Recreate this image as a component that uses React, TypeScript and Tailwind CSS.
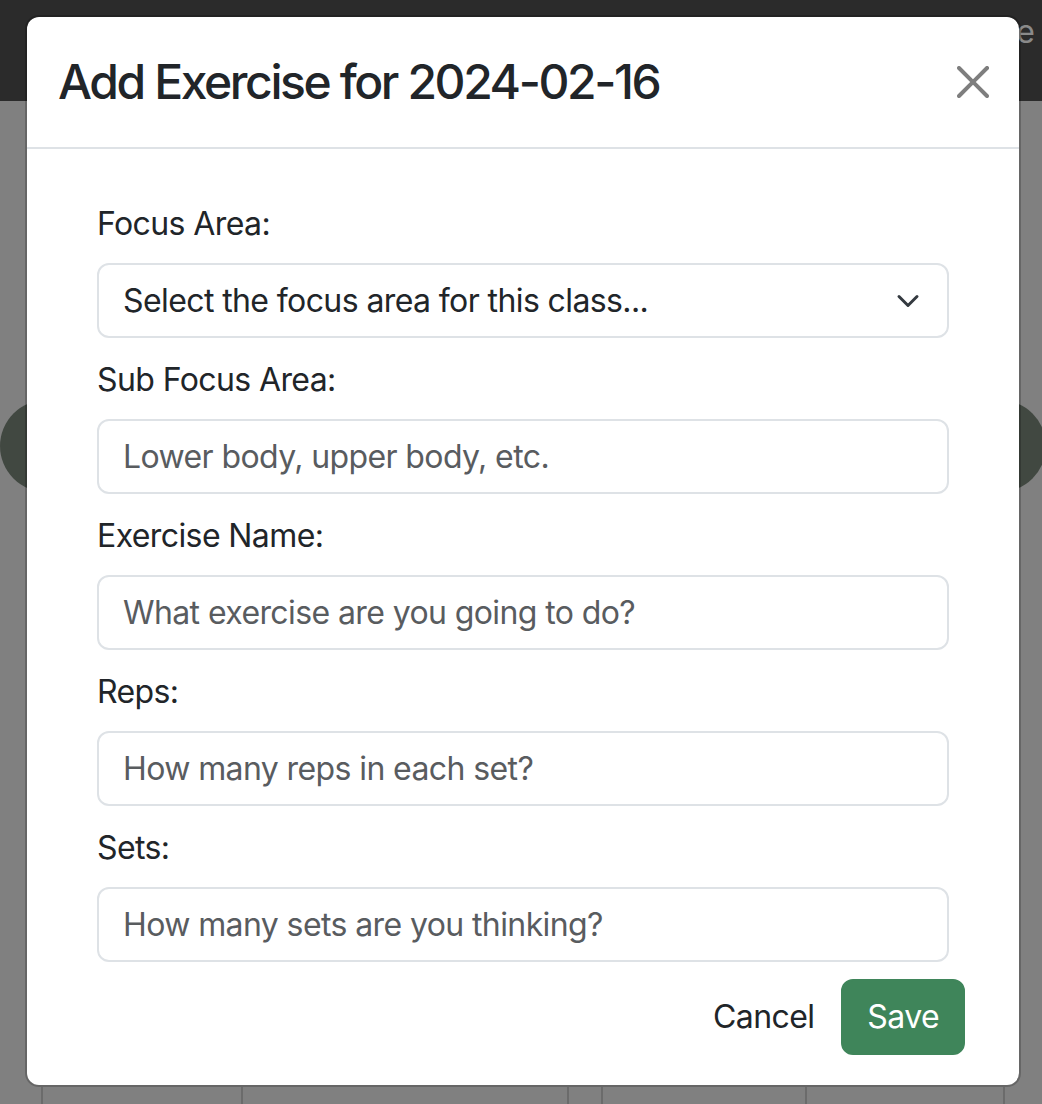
const fields = [
  { label: "Sub Focus Area:", placeholder: "Lower body, upper body, etc." },
  { label: "Exercise Name:", placeholder: "What exercise are you going to do?" },
  { label: "Reps:", placeholder: "How many reps in each set?" },
  { label: "Sets:", placeholder: "How many sets are you thinking?" },
]

function CloseIcon() {
  return (
    <svg width="32" height="32" viewBox="0 0 16 16" className="opacity-50">
      <path
        fill="#000"
        d="M.293.293a1 1 0 0 1 1.414 0L8 6.586 14.293.293a1 1 0 1 1 1.414 1.414L9.414 8l6.293 6.293a1 1 0 0 1-1.414 1.414L8 9.414l-6.293 6.293a1 1 0 0 1-1.414-1.414L6.586 8 .293 1.707a1 1 0 0 1 0-1.414z"
      />
    </svg>
  )
}

function SelectArrow() {
  return (
    <svg width="24" height="24" viewBox="0 0 16 16" className="pointer-events-none absolute right-[29px] top-[26px]">
      <path fill="none" stroke="#343a40" strokeLinecap="round" strokeLinejoin="round" strokeWidth="2" d="m2 5 6 6 6-6" />
    </svg>
  )
}

function Field({ label, placeholder }: { label: string; placeholder: string }) {
  return (
    <div className="flex flex-col">
      <label className="mb-[15px] text-[32px] leading-[48px] tracking-[-0.6px] text-[#212529]">{label}</label>
      <input
        type="text"
        placeholder={placeholder}
        className="h-[75px] w-full rounded-[12px] border-2 border-[#dee2e6] bg-white px-[24px] text-[32px] tracking-[-0.6px] text-[#212529] outline-none placeholder:text-[#595c5f]"
      />
    </div>
  )
}

export default function App() {
  return (
    <div
      className="relative h-[1104px] w-[1042px] overflow-hidden bg-[#808080]"
      style={{ fontFamily: "Inter, 'Noto Sans', sans-serif" }}
    >
      {/* page behind the backdrop */}
      <div className="flex h-[101px] items-start justify-end bg-[#2b2b2b] pr-[7px] pt-[8px]">
        <span className="text-[32px] leading-[48px] text-[#8a8a8a]">Profile</span>
      </div>
      <div className="mt-[299px] flex justify-between">
        <div className="h-[92px] w-[92px] rounded-full bg-[#414841]" />
        <div className="-mr-[4px] h-[92px] w-[92px] rounded-full bg-[#414841]" />
      </div>
      <div className="mt-[595px] ml-[41px] flex h-[40px]">
        <div className="w-[200px] border-l-2 border-[#6b6b6b]" />
        <div className="w-[326px] border-l-2 border-[#6b6b6b]" />
        <div className="w-[34px] border-l-2 border-[#6b6b6b]" />
        <div className="w-[204px] border-l-2 border-[#6b6b6b]" />
        <div className="w-[200px] border-x-2 border-[#6b6b6b]" />
      </div>

      {/* modal */}
      <div className="absolute left-[25px] top-[15px] flex w-[996px] flex-col rounded-[14px] border-2 border-black/20 bg-white bg-clip-padding">
        <div className="flex h-[132px] items-center justify-between border-b-2 border-[#dee2e6] pl-[31px] pr-[30px]">
          <h4 className="text-[48px] font-medium leading-[58px] tracking-[-2.4px] text-[#212529]">Add Exercise for 2024-02-16</h4>
          <button type="button" className="flex h-[32px] w-[32px] items-center justify-center">
            <CloseIcon />
          </button>
        </div>

        <div className="flex flex-col gap-[18px] px-[70px] pt-[51px]">
          <div className="flex flex-col">
            <label className="mb-[15px] text-[32px] leading-[48px] tracking-[-0.6px] text-[#212529]">Focus Area:</label>
            <div className="relative">
              <select className="h-[75px] w-full appearance-none rounded-[12px] border-2 border-[#dee2e6] bg-white pl-[24px] pr-[80px] text-[32px] tracking-[-0.6px] text-[#212529] outline-none">
                <option>Select the focus area for this class...</option>
              </select>
              <SelectArrow />
            </div>
          </div>
          {fields.map((f) => (
            <Field key={f.label} label={f.label} placeholder={f.placeholder} />
          ))}
        </div>

        <div className="mt-[17px] flex justify-end gap-px pb-[30px] pr-[54px]">
          <button type="button" className="rounded-[12px] border-2 border-transparent px-[24px] py-[12px] text-[32px] leading-[48px] tracking-[-0.6px] text-[#212529]">
            Cancel
          </button>
          <button type="button" className="rounded-[12px] border-2 border-[#3f855a] bg-[#3f855a] px-[24px] py-[12px] text-[32px] leading-[48px] tracking-[-0.6px] text-white">
            Save
          </button>
        </div>
      </div>
    </div>
  )
}
